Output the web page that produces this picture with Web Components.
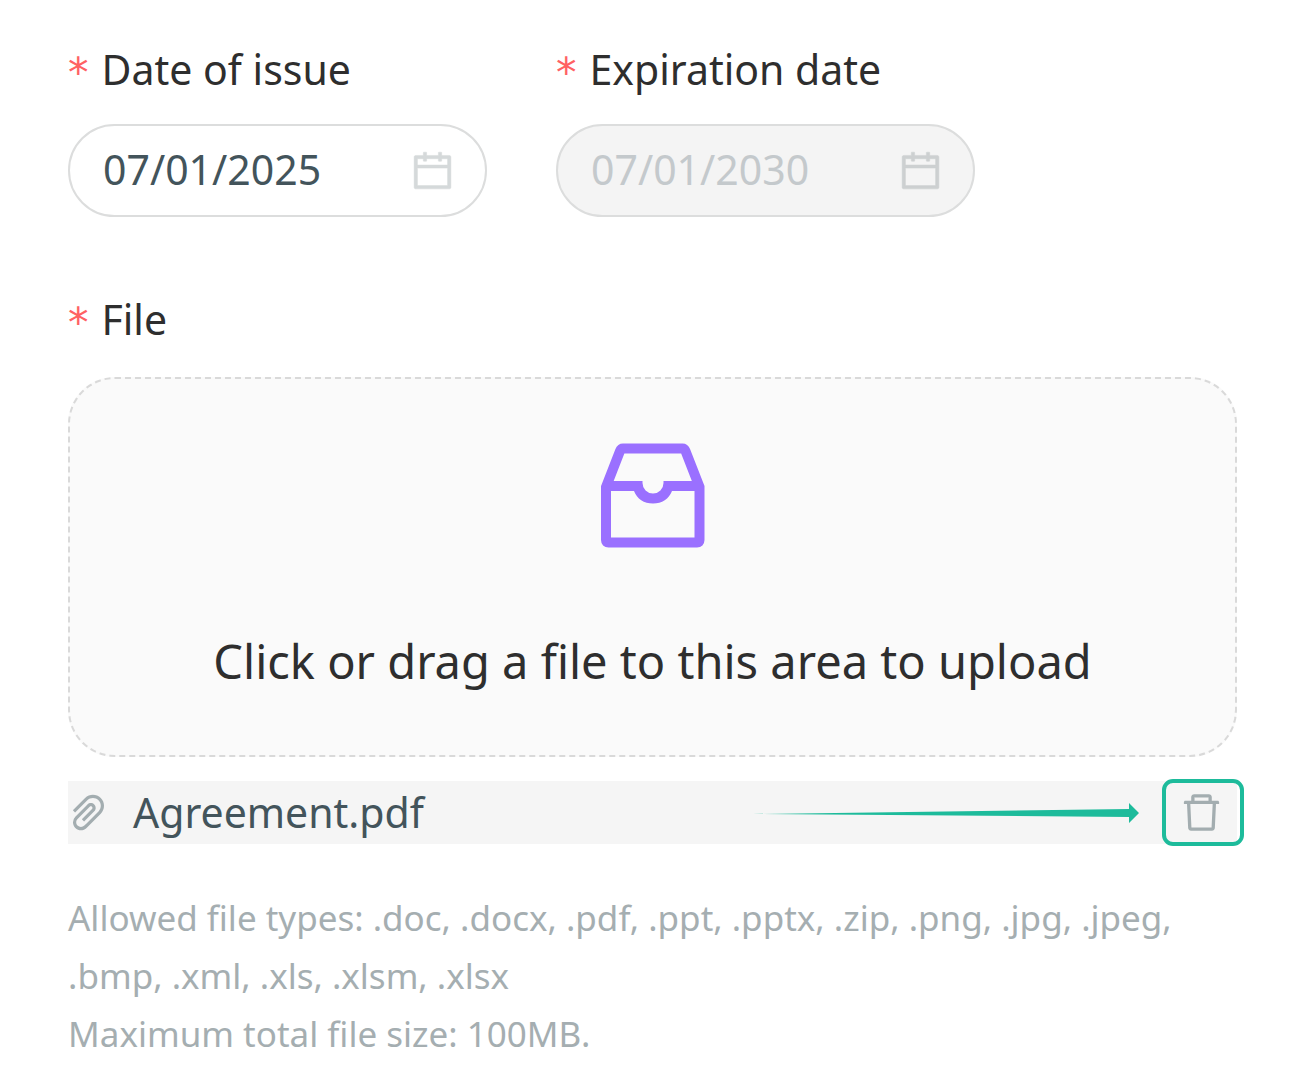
<!DOCTYPE html>
<html lang="en">
<head>
<meta charset="utf-8">
<title>Document upload</title>
<style>
  body {
    margin: 0;
    background: #fff;
    color: #2e2e2e;
    font-family: "Noto Sans", sans-serif;
    font-size: 41px;
    line-height: 64px;
  }
</style>
</head>
<body>
<document-form>
  <date-field slot="dates" label="Date of issue" value="07/01/2025"></date-field>
  <date-field slot="dates" label="Expiration date" value="07/01/2030" disabled></date-field>
  <file-drop slot="file" label="File">Click or drag a file to this area to upload</file-drop>
  <file-item slot="file">Agreement.pdf</file-item>
  <upload-hint slot="file">
    <div>Allowed file types: .doc, .docx, .pdf, .ppt, .pptx, .zip, .png, .jpg, .jpeg, .bmp, .xml, .xls, .xlsm, .xlsx</div>
    <div>Maximum total file size: 100MB.</div>
  </upload-hint>
</document-form>

<script>
// Shared by the fields that show a required label
var LABEL_CSS = `
  .label { display: flex; align-items: flex-start; gap: 13px; height: 64px; white-space: nowrap; }
  .mark { color: #ff6163; font-family: "DejaVu Sans", sans-serif; padding-top: 4px; }
`;

class DocumentForm extends HTMLElement {
  constructor() {
    super();
    this.attachShadow({ mode: "open" }).innerHTML = `
      <style>
        :host { display: block; padding: 37px 54px 24px 68px; }
        form { display: flex; flex-direction: column; gap: 70px; }
        .dates { display: flex; gap: 69px; }
        ::slotted(date-field) { flex: 0 1 419px; min-width: 0; }
        .file { display: flex; flex-direction: column; }
      </style>
      <form>
        <div class="dates"><slot name="dates"></slot></div>
        <div class="file"><slot name="file"></slot></div>
      </form>`;
  }
}

class DateField extends HTMLElement {
  constructor() {
    super();
    this.attachShadow({ mode: "open" }).innerHTML = `
      <style>
        :host { display: block; }
        ${LABEL_CSS}
        .box {
          display: flex;
          align-items: center;
          box-sizing: border-box;
          height: 93px;
          margin-top: 23px;
          padding: 0 29px 0 33px;
          border: 2px solid #dcdddd;
          border-radius: 47px;
          background: #fff;
        }
        input {
          flex: 1;
          min-width: 0;
          padding: 0 0 3px;
          border: 0;
          outline: none;
          background: none;
          font: inherit;
          color: #43545b;
        }
        button { display: flex; padding: 0; border: 0; background: none; color: #d5d9da; cursor: pointer; }
        svg { width: 47px; height: 47px; fill: currentColor; stroke: currentColor; stroke-width: 10; }
        :host([disabled]) .box { background: #f4f4f4; }
        :host([disabled]) input { color: #c4c9cc; }
        :host([disabled]) button { color: #cdd0d1; cursor: default; }
      </style>
      <label class="label" for="date"><span class="mark">*</span><span id="text"></span></label>
      <div class="box">
        <input id="date" type="text" required>
        <button type="button" aria-label="Open calendar">
          <svg viewBox="0 0 1024 1024"><path d="M880 184H712v-64c0-4.4-3.6-8-8-8h-56c-4.4 0-8 3.6-8 8v64H384v-64c0-4.4-3.6-8-8-8h-56c-4.4 0-8 3.6-8 8v64H144c-17.7 0-32 14.3-32 32v664c0 17.7 14.3 32 32 32h736c17.7 0 32-14.3 32-32V216c0-17.7-14.3-32-32-32zm-40 656H184V460h656v380zM184 392V256h128v48c0 4.4 3.6 8 8 8h56c4.4 0 8-3.6 8-8v-48h256v48c0 4.4 3.6 8 8 8h56c4.4 0 8-3.6 8-8v-48h128v136H184z"/></svg>
        </button>
      </div>`;
  }

  connectedCallback() {
    var root = this.shadowRoot;
    var input = root.getElementById("date");
    root.getElementById("text").textContent = this.getAttribute("label");
    input.value = this.getAttribute("value");
    input.disabled = this.hasAttribute("disabled");
    root.querySelector("button").disabled = input.disabled;
  }
}

class FileDrop extends HTMLElement {
  constructor() {
    super();
    this.attachShadow({ mode: "open" }).innerHTML = `
      <style>
        :host { display: block; }
        ${LABEL_CSS}
        .area {
          position: relative;
          display: flex;
          flex-direction: column;
          align-items: center;
          margin-top: 26px;
          padding: 64px 24px 59px;
          border: 2px dashed #d9d9d9;
          border-radius: 47px;
          background: #fafafa;
          text-align: center;
        }
        svg { width: 104px; height: 105px; }
        .text { margin-top: 78px; font-size: 47px; line-height: 70px; }
        /* the native picker covers the area so that it takes clicks and drops */
        input { position: absolute; inset: 0; width: 100%; height: 100%; opacity: 0; cursor: pointer; }
      </style>
      <label class="label" for="file"><span class="mark">*</span><span id="text"></span></label>
      <div class="area">
        <svg viewBox="0 0 104 105">
          <path d="M5 44L19 8Q20 5.500 22 5.500H81.500Q83.500 5.500 84.500 8L98.500 44V97Q98.500 99.500 96 99.500H7.500Q5 99.500 5 97Z" fill="none" stroke="#9a70ff" stroke-width="10"/>
          <path d="M5 38H41.500V40A10.500 10.500 0 0 0 62.500 40V38H98V48H71C68 56 61 60.500 52 60.500S36 56 33 48H5Z" fill="#9a70ff"/>
        </svg>
        <div class="text"><slot></slot></div>
        <input id="file" type="file">
      </div>`;
  }

  connectedCallback() {
    this.shadowRoot.getElementById("text").textContent = this.getAttribute("label");
  }
}

class FileItem extends HTMLElement {
  constructor() {
    super();
    this.attachShadow({ mode: "open" }).innerHTML = `
      <style>
        :host {
          position: relative;
          display: flex;
          align-items: center;
          height: 63px;
          margin-top: 24px;
          padding-left: 2px;
          background: #f5f5f5;
          color: #43545b;
        }
        svg { display: block; fill: #a3adb0; }
        .clip { width: 37px; height: 47px; }
        .name { flex: 1; margin-left: 26px; padding-bottom: 2px; }
        button {
          position: relative;
          display: flex;
          align-items: center;
          justify-content: center;
          align-self: stretch;
          width: 71px;
          padding: 0;
          border: 0;
          background: none;
          cursor: pointer;
        }
        .bin { width: 47px; height: 47px; }
        /* callout frame round the delete button */
        button::after {
          content: "";
          position: absolute;
          inset: -2px -7px -2px -4px;
          border: 4px solid #1dbb9b;
          border-radius: 11px;
        }
        .arrow { position: absolute; right: 98px; top: 22px; width: 386px; height: 20px; }
        .arrow path { fill: #1dbb9b; }
      </style>
      <svg class="clip" viewBox="112 0 800 1024"><path d="M779.3 196.6c-94.2-94.2-247.6-94.2-341.7 0l-261 260.8c-1.7 1.7-2.6 4-2.6 6.4s.9 4.7 2.6 6.4l36.9 36.9a9 9 0 0 0 12.7 0l261-260.8c32.4-32.4 75.5-50.2 121.3-50.2s88.9 17.8 121.2 50.2c32.4 32.4 50.2 75.5 50.2 121.2 0 45.8-17.8 88.8-50.2 121.2l-266 265.9-43.1 43.1c-40.3 40.3-105.8 40.3-146.1 0-19.5-19.5-30.2-45.4-30.2-73s10.7-53.5 30.2-73l263.9-263.8c6.7-6.6 15.5-10.3 24.9-10.3h.1c9.4 0 18.1 3.7 24.7 10.3 6.7 6.7 10.3 15.5 10.3 24.9 0 9.3-3.7 18.1-10.3 24.7L372.4 653c-1.7 1.7-2.6 4-2.6 6.4s.9 4.7 2.6 6.4l36.9 36.9a9 9 0 0 0 12.7 0l215.6-215.6c19.9-19.9 30.8-46.3 30.8-74.4s-11-54.6-30.8-74.4c-41.1-41.1-107.9-41-149 0L463 364 224.8 602.1A172.22 172.22 0 0 0 174 724.8c0 46.3 18.1 89.8 50.8 122.5 33.9 33.8 78.3 50.7 122.7 50.7 44.4 0 88.8-16.9 122.6-50.7l309.2-309C824.8 492.7 850 432 850 367.5c.1-64.6-25.1-125.3-70.7-170.9z"/></svg>
      <span class="name"><slot></slot></span>
      <svg class="arrow" viewBox="0 0 386 20"><path d="M0 11L376 6V0L386 10L376 20V14Z"/></svg>
      <button type="button" aria-label="Remove file">
        <svg class="bin" viewBox="0 0 1024 1024"><path d="M360 184h-8c4.4 0 8-3.6 8-8v8h304v-8c0 4.4 3.6 8 8 8h-8v72h72v-80c0-35.3-28.7-64-64-64H352c-35.3 0-64 28.7-64 64v80h72v-72zm504 72H160c-17.7 0-32 14.3-32 32v32c0 4.4 3.6 8 8 8h60.4l24.7 523c1.6 34.1 29.8 61 63.9 61h454c34.2 0 62.3-26.8 63.9-61l24.7-523H888c4.4 0 8-3.6 8-8v-32c0-17.7-14.3-32-32-32zM731.3 840H292.7l-24.2-512h487l-24.2 512z"/></svg>
      </button>`;
  }
}

class UploadHint extends HTMLElement {
  constructor() {
    super();
    this.attachShadow({ mode: "open" }).innerHTML = `
      <style>
        :host { display: block; margin-top: 45px; color: #a5aeb1; font-size: 35px; line-height: 58px; }
      </style>
      <slot></slot>`;
  }
}

customElements.define("document-form", DocumentForm);
customElements.define("date-field", DateField);
customElements.define("file-drop", FileDrop);
customElements.define("file-item", FileItem);
customElements.define("upload-hint", UploadHint);
</script>
</body>
</html>
